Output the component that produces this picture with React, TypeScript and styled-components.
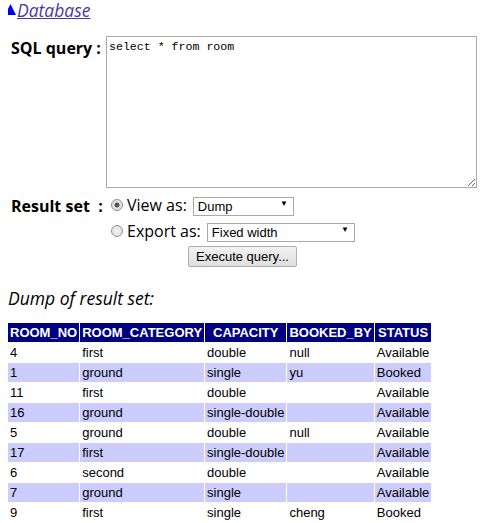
import React from 'react';
import styled, { createGlobalStyle } from 'styled-components';

const GlobalStyle = createGlobalStyle`
  body {
    margin: 0 8px;
    background: #fff;
    font-family: "Open Sans", "Noto Sans", sans-serif;
    color: #000;
  }
`;

const TopLink = styled.a`
  display: flex;
  align-items: center;
  height: 20px;
  padding: 0 0 1px 5px;
  margin-left: -8px;
  font-size: 17.5px;
  line-height: 19px;
  font-style: italic;
  color: #4b3a9e;
  text-decoration: none;
`;

const Arrow = styled.svg`
  flex-shrink: 0;
  display: block;
  width: 11px;
  height: 11px;
  margin: 0 1px 2px 0;
`;

const LinkText = styled.span`
  text-decoration: underline;
`;

const Form = styled.div`
  display: grid;
  grid-template-columns: 98px 1fr;
  row-gap: 6px;
  margin-top: 15px;
`;

const Label = styled.div`
  padding: 1px 0 0 3px;
  font-weight: bold;
  font-size: 16px;
  line-height: 22px;
  white-space: nowrap;
`;

const QueryBox = styled.textarea`
  box-sizing: border-box;
  width: 371px;
  height: 152px;
  margin: 0;
  padding: 3px 2px;
  border: 1px solid #a9a9a9;
  font-family: "Liberation Mono", monospace;
  font-size: 11.6px;
  line-height: 14px;
  color: #000;
`;

const Options = styled.div`
  display: flex;
  flex-direction: column;
  gap: 4px;
  padding-left: 4px;
`;

const OptionRow = styled.label`
  display: flex;
  align-items: center;
  height: 22px;
  font-size: 16px;
  white-space: nowrap;
`;

const Radio = styled.input`
  appearance: none;
  box-sizing: border-box;
  width: 12px;
  height: 12px;
  margin: 0 4px 0 1px;
  border: 1px solid #8f8f8f;
  border-radius: 50%;
  background: radial-gradient(circle, #f4f4f4 0%, #dcdcdc 100%);
  &:checked {
    background: radial-gradient(circle, #555 0 2.2px, #e2e2e2 2.8px);
  }
`;

const PickerWrap = styled.span<{ $w: number }>`
  position: relative;
  display: inline-block;
  width: ${(p) => p.$w}px;
  height: 19px;
  margin: 0 0 3px 6px;
`;

const Picker = styled.select`
  appearance: none;
  box-sizing: border-box;
  width: 100%;
  height: 100%;
  margin: 0;
  padding: 0 4px;
  font-family: "Liberation Sans", Arial, sans-serif;
  font-size: 13px;
  color: #000;
  border: 1px solid #a9a9a9;
  border-radius: 0;
  background: #fff;
`;

const Caret = styled.span`
  position: absolute;
  right: 6px;
  top: 4px;
  font-size: 8px;
  line-height: 10px;
  color: #000;
  pointer-events: none;
`;

const RunButton = styled.button`
  align-self: flex-start;
  margin-left: 78px;
  height: 21px;
  padding: 0 7px;
  font-family: "Liberation Sans", Arial, sans-serif;
  font-size: 13px;
  color: #000;
  background: linear-gradient(#f3f3f3, #dedede);
  border: 1px solid #adadad;
  border-radius: 2px;
`;

const Caption = styled.p`
  margin: 22px 0 15px;
  font-style: italic;
  font-size: 17.5px;
  line-height: 18px;
`;

const ResultTable = styled.table`
  border-spacing: 1px;
  margin-left: -1px;
  font-family: "Liberation Sans", Arial, sans-serif;
  font-size: 13px;
`;

const Head = styled.th`
  background: #000080;
  color: #fff;
  font-weight: bold;
  padding: 2px;
  line-height: 15px;
  white-space: nowrap;
`;

const Row = styled.tr<{ $shade: boolean }>`
  background: ${(p) => (p.$shade ? '#ccccff' : '#fff')};
`;

const Cell = styled.td`
  padding: 2px;
  line-height: 15px;
  white-space: nowrap;
`;

const columns = ['ROOM_NO', 'ROOM_CATEGORY', 'CAPACITY', 'BOOKED_BY', 'STATUS'];

const rows = [
  ['4', 'first', 'double', 'null', 'Available'],
  ['1', 'ground', 'single', 'yu', 'Booked'],
  ['11', 'first', 'double', '', 'Available'],
  ['16', 'ground', 'single-double', '', 'Available'],
  ['5', 'ground', 'double', 'null', 'Available'],
  ['17', 'first', 'single-double', '', 'Available'],
  ['6', 'second', 'double', '', 'Available'],
  ['7', 'ground', 'single', '', 'Available'],
  ['9', 'first', 'single', 'cheng', 'Booked'],
];

export default function App() {
  return (
    <>
      <GlobalStyle />
      <TopLink href="#">
        <Arrow viewBox="0 0 11 11">
          <polygon points="5.5,0 11,11 0,11" fill="#0000ff" />
        </Arrow>
        <LinkText>Database</LinkText>
      </TopLink>
      <Form>
        <Label>SQL query :</Label>
        <QueryBox defaultValue="select * from room" />
        <Label>Result set&nbsp; :</Label>
        <Options>
          <OptionRow>
            <Radio type="radio" name="mode" defaultChecked />
            View as:
            <PickerWrap $w={101}>
              <Picker>
                <option>Dump</option>
              </Picker>
              <Caret>▼</Caret>
            </PickerWrap>
          </OptionRow>
          <OptionRow>
            <Radio type="radio" name="mode" />
            Export as:
            <PickerWrap $w={148}>
              <Picker>
                <option>Fixed width</option>
              </Picker>
              <Caret>▼</Caret>
            </PickerWrap>
          </OptionRow>
          <RunButton>Execute query...</RunButton>
        </Options>
      </Form>
      <Caption>Dump of result set:</Caption>
      <ResultTable>
        <thead>
          <tr>
            {columns.map((c) => (
              <Head key={c}>{c}</Head>
            ))}
          </tr>
        </thead>
        <tbody>
          {rows.map((r, i) => (
            <Row key={i} $shade={i % 2 === 1}>
              {r.map((v, j) => (
                <Cell key={j}>{v}</Cell>
              ))}
            </Row>
          ))}
        </tbody>
      </ResultTable>
    </>
  );
}
